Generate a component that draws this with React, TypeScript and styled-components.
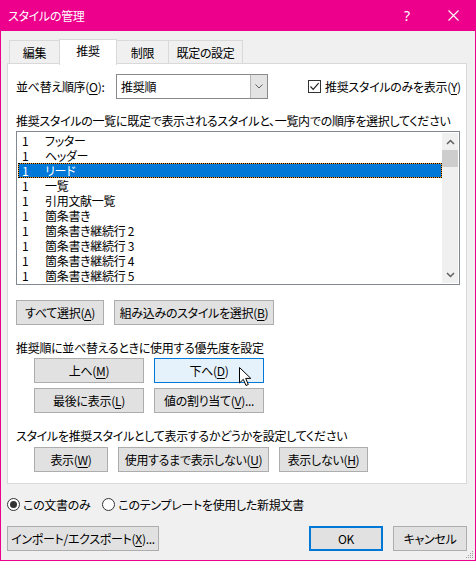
import React from "react";
import styled, { createGlobalStyle, css } from "styled-components";

const GlobalStyle = createGlobalStyle`
  html, body { margin: 0; padding: 0; background: #f0f0f0; }
  body {
    font-family: "Noto Sans CJK JP", "Noto Sans", sans-serif;
    font-size: 12px;
    line-height: 15px;
    color: #000;
    font-feature-settings: "palt";
    letter-spacing: -0.3px;
  }
  * { box-sizing: border-box; }
`;

const PINK = "#ec008c";

const Window = styled.div`
  width: 476px;
  height: 561px;
  display: flex;
  flex-direction: column;
  background: #f0f0f0;
  position: relative;
  overflow: hidden;
`;

const TitleBar = styled.div`
  height: 31px;
  flex: none;
  background: ${PINK};
  color: #fff;
  display: flex;
  align-items: center;
  padding-left: 8px;
`;

const TitleText = styled.div`
  flex: 1;
  font-size: 12px;
`;

const TitleButton = styled.div`
  width: 46px;
  height: 31px;
  display: flex;
  align-items: center;
  justify-content: center;
  color: #fff;
  font-family: "Noto Sans", sans-serif;
  font-size: 14px;
  font-feature-settings: normal;
`;

const Body = styled.div`
  flex: 1;
  border: 1px solid ${PINK};
  border-top: none;
  padding: 8px 8px 9px 6px;
  display: flex;
  flex-direction: column;
  position: relative;
`;

const TabStrip = styled.div`
  height: 24px;
  display: flex;
  align-items: flex-end;
  margin-left: 2px;
`;

const Tab = styled.div<{ $w: number; $active?: boolean }>`
  width: ${(p) => p.$w}px;
  height: 23px;
  border: 1px solid #d9d9d9;
  border-bottom: none;
  background: #f0f0f0;
  margin-right: -1px;
  display: flex;
  align-items: center;
  justify-content: center;
  ${(p) =>
    p.$active &&
    css`
      height: 26px;
      margin-bottom: -2px;
      background: #fff;
      position: relative;
      z-index: 1;
      padding-bottom: 4px;
    `}
`;

const Panel = styled.div`
  background: #fff;
  border: 1px solid #d9d9d9;
  padding: 10px 5px 11px 8px;
  display: flex;
  flex-direction: column;
`;

const SortRow = styled.div`
  height: 25px;
  display: flex;
  align-items: center;
`;

const SortLabel = styled.div`
  width: 100px;
  white-space: nowrap;
`;

const Combo = styled.div`
  width: 152px;
  height: 25px;
  border: 1px solid #8a8a8a;
  display: flex;
`;

const ComboText = styled.div`
  flex: 1;
  padding-left: 4px;
  display: flex;
  align-items: center;
`;

const ComboButton = styled.div`
  width: 17px;
  background: #e3e3e3;
  border-left: 1px solid #b8b8b8;
  display: flex;
  align-items: center;
  justify-content: center;
`;

const CheckLabel = styled.label`
  margin-left: 40px;
  display: flex;
  align-items: center;
  gap: 4px;
  white-space: nowrap;
  flex: none;
`;

const CheckBox = styled.div`
  width: 13px;
  height: 13px;
  border: 1px solid #333;
  background: #fff;
  display: flex;
  align-items: center;
  justify-content: center;
  flex: none;
`;

const Caption = styled.div<{ $mt: number }>`
  margin-top: ${(p) => p.$mt}px;
  height: 15px;
  white-space: nowrap;
`;

const ListBox = styled.div`
  margin-top: 3px;
  width: 444px;
  height: 154px;
  border: 1px solid #828790;
  padding: 1px;
  display: flex;
`;

const Rows = styled.div`
  flex: 1;
  display: flex;
  flex-direction: column;
`;

const Row = styled.div<{ $selected?: boolean }>`
  height: 15px;
  line-height: 15px;
  display: flex;
  padding-left: 4px;
  white-space: nowrap;
  ${(p) =>
    p.$selected &&
    css`
      color: #fff;
      padding-left: 3px;
      line-height: 13px;
      border: 1px dotted #000;
      background: linear-gradient(#0078d7, #0078d7) padding-box, #f59a23 border-box;
    `}
`;

const RowNum = styled.span`
  width: 23px;
`;

const ScrollBar = styled.div`
  width: 16px;
  background: #f0f0f0;
  display: flex;
  flex-direction: column;
`;

const ScrollArrow = styled.div`
  height: 17px;
  display: flex;
  align-items: center;
  justify-content: center;
`;

const ScrollThumb = styled.div`
  height: 17px;
  background: #cdcdcd;
`;

const ScrollTrack = styled.div`
  flex: 1;
`;

const ButtonRow = styled.div<{ $mt: number; $indent?: number }>`
  margin-top: ${(p) => p.$mt}px;
  padding-left: ${(p) => p.$indent ?? 0}px;
  display: flex;
  gap: 10px;
`;

const ButtonGrid = styled.div`
  margin-top: 3px;
  padding-left: 18px;
  display: grid;
  grid-template-columns: 110px 110px;
  column-gap: 10px;
  row-gap: 5px;
`;

const Button = styled.div<{ $w: number; $hover?: boolean; $default?: boolean }>`
  width: ${(p) => p.$w}px;
  height: 25px;
  background: #e1e1e1;
  border: 1px solid #adadad;
  display: flex;
  align-items: center;
  justify-content: center;
  white-space: nowrap;
  position: relative;
  ${(p) =>
    p.$hover &&
    css`
      background: #e5f1fb;
      border-color: #0078d7;
    `}
  ${(p) =>
    p.$default &&
    css`
      border: 2px solid #0078d7;
    `}
`;

const U = styled.span`
  text-decoration: underline;
  text-underline-offset: 2px;
`;

const RadioRow = styled.div`
  margin-top: 13px;
  height: 15px;
  display: flex;
  align-items: center;
  gap: 12px;
`;

const RadioLabel = styled.label`
  display: flex;
  align-items: center;
  gap: 3px;
`;

const RadioCircle = styled.div<{ $checked?: boolean }>`
  width: 13px;
  height: 13px;
  border-radius: 50%;
  border: 1px solid #333;
  background: #fff;
  display: flex;
  align-items: center;
  justify-content: center;
  &::after {
    content: "";
    width: 7px;
    height: 7px;
    border-radius: 50%;
    background: ${(p) => (p.$checked ? "#333" : "transparent")};
  }
`;

const BottomRow = styled.div`
  margin-top: 14px;
  display: flex;
  gap: 10px;
`;

const Spacer = styled.div`
  flex: 1;
`;

const Cursor = styled.svg`
  position: absolute;
  left: 84px;
  top: 8px;
`;

const Grip = styled.svg`
  position: absolute;
  right: 1px;
  bottom: 1px;
`;

const Chevron = ({ up, color = "#606060" }: { up?: boolean; color?: string }) => (
  <svg width="9" height="6" viewBox="0 0 9 6">
    <path
      d={up ? "M1 5 L4.5 1.5 L8 5" : "M1 1 L4.5 4.5 L8 1"}
      fill="none"
      stroke={color}
      strokeWidth="1.5"
    />
  </svg>
);

const items = [
  "フッター",
  "ヘッダー",
  "リード",
  "一覧",
  "引用文献一覧",
  "箇条書き",
  "箇条書き継続行 2",
  "箇条書き継続行 3",
  "箇条書き継続行 4",
  "箇条書き継続行 5",
];

export default function App() {
  return (
    <>
      <GlobalStyle />
      <Window>
        <TitleBar>
          <TitleText>スタイルの管理</TitleText>
          <TitleButton>?</TitleButton>
          <TitleButton>
            <svg width="11" height="11" viewBox="0 0 11 11">
              <path d="M0.5 0.5 L10.5 10.5 M10.5 0.5 L0.5 10.5" stroke="#fff" strokeWidth="1.1" />
            </svg>
          </TitleButton>
        </TitleBar>
        <Body>
          <TabStrip>
            <Tab $w={51}>編集</Tab>
            <Tab $w={58} $active>
              推奨
            </Tab>
            <Tab $w={53}>制限</Tab>
            <Tab $w={75}>既定の設定</Tab>
          </TabStrip>
          <Panel>
            <SortRow>
              <SortLabel>
                並べ替え順序(<U>O</U>):
              </SortLabel>
              <Combo>
                <ComboText>推奨順</ComboText>
                <ComboButton>
                  <svg width="8" height="5" viewBox="0 0 8 5">
                    <path d="M0.5 0.5 L4 4 L7.5 0.5" fill="none" stroke="#606060" strokeWidth="1" />
                  </svg>
                </ComboButton>
              </Combo>
              <CheckLabel>
                <CheckBox>
                  <svg width="11" height="11" viewBox="0 0 11 11">
                    <path d="M1.5 5.5 L4.2 8.3 L9.6 2.2" fill="none" stroke="#222" strokeWidth="1.2" />
                  </svg>
                </CheckBox>
                <span>
                  推奨スタイルのみを表示(<U>Y</U>)
                </span>
              </CheckLabel>
            </SortRow>
            <Caption $mt={14}>
              推奨スタイルの一覧に既定で表示されるスタイルと、一覧内での順序を選択してください
            </Caption>
            <ListBox>
              <Rows>
                {items.map((it, i) => (
                  <Row key={it} $selected={i === 2}>
                    <RowNum>1</RowNum>
                    <span>{it}</span>
                  </Row>
                ))}
              </Rows>
              <ScrollBar>
                <ScrollArrow>
                  <Chevron up />
                </ScrollArrow>
                <ScrollThumb />
                <ScrollTrack />
                <ScrollArrow>
                  <Chevron />
                </ScrollArrow>
              </ScrollBar>
            </ListBox>
            <ButtonRow $mt={15}>
              <Button $w={88}>
                すべて選択(<U>A</U>)
              </Button>
              <Button $w={160}>
                組み込みのスタイルを選択(<U>B</U>)
              </Button>
            </ButtonRow>
            <Caption $mt={15}>推奨順に並べ替えるときに使用する優先度を設定</Caption>
            <ButtonGrid>
              <Button $w={110}>
                上へ(<U>M</U>)
              </Button>
              <Button $w={110} $hover>
                下へ(<U>D</U>)
                <Cursor width="13" height="20" viewBox="0 0 13 20">
                  <path
                    d="M0.5 0.5 L0.5 16 L4.3 12.3 L7 18.5 L9.3 17.5 L6.7 11.4 L11.8 11.4 Z"
                    fill="#fff"
                    stroke="#000"
                    strokeWidth="1"
                    strokeLinejoin="miter"
                  />
                </Cursor>
              </Button>
              <Button $w={110}>
                最後に表示(<U>L</U>)
              </Button>
              <Button $w={110}>
                値の割り当て(<U>V</U>)...
              </Button>
            </ButtonGrid>
            <Caption $mt={15}>スタイルを推奨スタイルとして表示するかどうかを設定してください</Caption>
            <ButtonRow $mt={4} $indent={18}>
              <Button $w={74}>
                表示(<U>W</U>)
              </Button>
              <Button $w={151}>
                使用するまで表示しない(<U>U</U>)
              </Button>
              <Button $w={89}>
                表示しない(<U>H</U>)
              </Button>
            </ButtonRow>
          </Panel>
          <RadioRow>
            <RadioLabel>
              <RadioCircle $checked />
              この文書のみ
            </RadioLabel>
            <RadioLabel>
              <RadioCircle />
              このテンプレートを使用した新規文書
            </RadioLabel>
          </RadioRow>
          <BottomRow>
            <Button $w={152}>
              インポート/エクスポート(<U>X</U>)...
            </Button>
            <Spacer />
            <Button $w={74} $default>
              OK
            </Button>
            <Button $w={74}>キャンセル</Button>
          </BottomRow>
          <Grip width="8" height="8" viewBox="0 0 8 8">
            <g fill="#a0a0a0">
              <rect x="6" y="0" width="1" height="1" />
              <rect x="4" y="2" width="1" height="1" />
              <rect x="6" y="2" width="1" height="1" />
              <rect x="2" y="4" width="1" height="1" />
              <rect x="4" y="4" width="1" height="1" />
              <rect x="6" y="4" width="1" height="1" />
              <rect x="0" y="6" width="1" height="1" />
              <rect x="2" y="6" width="1" height="1" />
              <rect x="4" y="6" width="1" height="1" />
              <rect x="6" y="6" width="1" height="1" />
            </g>
          </Grip>
        </Body>
      </Window>
    </>
  );
}
